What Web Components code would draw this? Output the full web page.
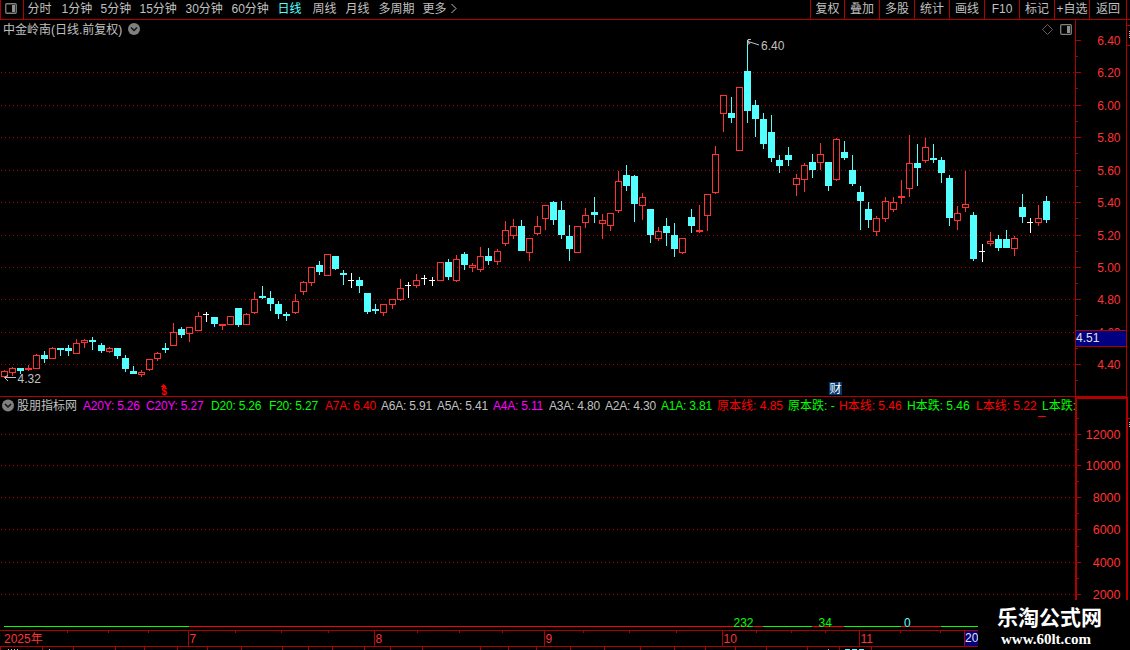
<!DOCTYPE html>
<html lang="zh-CN">
<head>
<meta charset="utf-8">
<title>中金岭南</title>
<style>
    body {
        margin: 0;
        width: 1130px;
        height: 650px;
        overflow: hidden;
        background: #000;
        color: #c0c0c0;
        font: 12px/14px "Liberation Sans", "Noto Sans CJK SC", sans-serif;
    }
</style>
</head>
<body>
<stock-terminal>
    <period-toolbar slot="toolbar"></period-toolbar>
    <price-chart slot="price"></price-chart>
    <indicator-legend slot="legend" name="股朋指标网"></indicator-legend>
    <indicator-chart slot="indicator"></indicator-chart>
    <time-axis slot="time"></time-axis>
    <site-mark slot="mark" host="www.60lt.com">乐淘公式网</site-mark>
</stock-terminal>

<script>
const LINE = '#b00000';
const RED = '#ff3232';
const CYAN = '#54ffff';

const hline = (x1, x2, y, color = LINE, h = 1) =>
    `<rect x="${x1}" y="${y}" width="${x2 - x1}" height="${h}" fill="${color}"/>`;
const vline = (x, y1, y2, color = LINE, w = 1) =>
    `<rect x="${x}" y="${y1}" width="${w}" height="${y2 - y1}" fill="${color}"/>`;
const dots = (y) =>
    `<path d="M1 ${y + 0.5}H1075" stroke="#b00000" stroke-dasharray="1 3"/>`;
const label = (x, y, text, color = RED, anchor = 'start', size = 12) =>
    `<text x="${x}" y="${y}" fill="${color}" text-anchor="${anchor}" font-size="${size}">${text}</text>`;

const SVG_STYLE = `
    :host { display: block; }
    svg { display: block; shape-rendering: crispEdges; }
`;

class StockTerminal extends HTMLElement {
    constructor() {
        super();
        this.attachShadow({ mode: 'open' }).innerHTML = `
            <style>
                :host {
                    display: grid;
                    position: relative;
                    width: 1130px;
                    height: 650px;
                    grid-template-rows: 20px 377px 17px 216px 20px;
                    overflow: hidden;
                }
                .mark {
                    position: absolute;
                    right: 0;
                    bottom: 0;
                }
            </style>
            <slot name="toolbar"></slot>
            <slot name="price"></slot>
            <slot name="legend"></slot>
            <slot name="indicator"></slot>
            <slot name="time"></slot>
            <div class="mark"><slot name="mark"></slot></div>
        `;
    }
}

class PeriodToolbar extends HTMLElement {
    constructor() {
        super();
        // label, cell width
        const periods = [
            ['分时', 34], ['1分钟', 39], ['5分钟', 39], ['15分钟', 46], ['30分钟', 46], ['60分钟', 46],
            ['日线', 35], ['周线', 33], ['月线', 33], ['多周期', 44], ['更多', 27]
        ];
        const tools = [
            ['复权', 34], ['叠加', 35], ['多股', 35], ['统计', 35], ['画线', 35],
            ['F10', 35], ['标记', 35], ['+自选', 35], ['返回', 37]
        ];
        this.attachShadow({ mode: 'open' }).innerHTML = `
            <style>
                :host {
                    display: flex;
                    box-sizing: border-box;
                    height: 20px;
                    border-bottom: 1px solid ${LINE};
                    line-height: 19px;
                    white-space: nowrap;
                }
                .toggle {
                    box-sizing: border-box;
                    width: 24px;
                    padding: 3px 0 0 4px;
                    border: solid ${LINE};
                    border-width: 0 1px;
                    margin-right: 3.5px;
                }
                svg { display: block; }
                .active { color: ${CYAN}; }
                .tools {
                    display: flex;
                    margin-left: auto;
                    margin-right: 3px;
                    border-right: 1px solid ${LINE};
                }
                .tools span {
                    box-sizing: border-box;
                    border-left: 1px solid ${LINE};
                    text-align: center;
                }
            </style>
            <div class="toggle">
                <svg width="12" height="11"><rect x=".75" y=".75" width="10.5" height="9.5" rx="1" fill="none" stroke="#808080" stroke-width="1.3"/><rect x="7" y="2" width="3" height="7" fill="#909090"/></svg>
            </div>
            ${periods.map(([t, w]) => `<span style="width:${w}px" class="${t === '日线' ? 'active' : ''}">${t}</span>`).join('')}
            <svg width="10" height="18"><path d="M1.500 4L6 8.500L1.500 13" fill="none" stroke="#c0c0c0"/></svg>
            <div class="tools">${tools.map(([t, w]) => `<span style="width:${w}px">${t}</span>`).join('')}</div>
        `;
    }
}

class PriceChart extends HTMLElement {
    constructor() {
        super();
        this.attachShadow({ mode: 'open' }).innerHTML = `<style>${SVG_STYLE}</style>${this.draw()}`;
    }

    // x, kind (r hollow, s solid red, c cyan, w doji), high, body top, body bottom, low
    static candles = `
        4r370,371,377,377 12r367,368,373,376 20c368,368,371,374 28s365,368,370,371 36r354,355,369,369
        44c351,355,359,363 52r347,348,359,359 60c348,348,350,356 68c345,348,351,356 76r339,343,354,354
        84r339,340,343,348 92c337,340,342,350 101c343,345,351,353 109r347,348,352,353 117c348,348,356,359
        125c355,358,369,372 133c366,371,374,374 141r370,372,375,377 149r359,359,370,371 157r352,353,359,361
        165c343,348,350,353 173r323,332,346,346 181c327,329,335,338 189r327,327,334,342 198r312,316,331,331
        206w312,314,315,322 214c317,317,324,327 222s324,324,326,330 230r316,316,325,325 238c308,308,325,327
        246r313,314,325,325 254r292,299,313,314 262c286,296,298,299 270c291,298,304,311 278c301,304,314,319
        286c312,314,316,321 295r294,301,313,314 303r281,282,292,295 311r267,267,283,286 319c261,265,272,275
        327r254,254,276,276 335c256,256,269,270 343c270,273,275,285 351w273,280,281,288 359c277,280,286,293
        367c293,293,312,314 375c304,309,311,314 383r304,304,313,316 392r299,299,305,309 400r279,288,300,301
        408w282,285,286,298 416r274,280,286,288 424w275,278,279,285 432w277,280,281,286 440r262,262,281,281
        448c259,262,277,280 456r255,259,281,282 464c252,254,265,270 472r263,265,268,272 480r247,256,270,272
        488c248,256,261,265 497r249,251,262,265 505r221,230,244,246 513r219,226,236,239 521c220,226,251,251
        529r238,238,253,261 537r216,226,234,235 545r205,205,219,230 553c201,202,220,225 561c201,210,235,239
        569c225,236,249,261 577r226,226,253,253 585r208,215,223,228 594c197,212,215,223 602r214,220,224,239
        610r213,213,226,231 618r171,181,211,213 626c165,175,186,191 634c175,176,204,222 642r193,197,206,220
        650c209,209,235,243 658r227,231,239,241 666c218,226,233,246 674c223,235,249,257 682r238,238,253,254
        691c209,217,226,233 699s205,230,232,233 707r194,194,216,231 715r146,154,193,194 723r95,95,114,132
        731c97,113,118,123 739r87,87,151,151 747c40,71,111,123 755c100,105,119,137 763c113,119,144,149
        771c115,132,158,162 779c155,160,166,173 788c147,155,160,166 796r174,178,185,196 804r163,165,180,192
        812c154,162,170,178 820r143,154,163,170 828c162,162,186,191 836r138,139,180,181 844c141,152,158,160
        852c155,170,184,186 860c186,192,201,230 868c202,209,220,228 876r216,218,232,236 885r197,201,219,222
        893r197,202,210,212 901s180,196,198,204 909r135,163,189,197 917c144,163,168,186 925r138,147,161,163
        933c144,158,160,163 941c157,160,173,183 949c175,178,218,226 957r206,213,221,230 965r171,204,208,212
        973c212,215,259,261 982w244,251,252,262 990r232,241,244,246 998c235,239,248,251 1006c230,239,248,248
        1014r236,238,249,256 1022c194,207,217,223 1030w218,222,223,233 1038r205,218,223,226 1046c196,201,220,223
    `.trim().split(/\s+/).map((s) => {
        const [, x, kind, rest] = s.match(/^(\d+)([a-z])(.*)$/);
        return [Number(x), kind, ...rest.split(',').map(Number)];
    });

    candle([x, kind, high, top, bottom, low]) {
        const color = { c: CYAN, w: '#fff' }[kind] || RED;
        if (kind === 'r') {
            return vline(x, high, top, color) + vline(x, bottom, low, color) +
                `<rect x="${x - 2.5}" y="${top + 0.5}" width="6" height="${bottom - top - 1}" fill="none" stroke="${color}"/>`;
        }
        // a doji's bar is one pixel shorter than a body
        const right = kind === 'w' ? 3 : 4;
        return vline(x, high, low, color) + hline(x - 3, x + right, top, color, bottom - top);
    }

    draw() {
        const levels = [40, 72, 105, 137, 170, 202, 235, 267, 299, 332, 364];
        const axis = levels.map((y, i) =>
            hline(1076, 1081, y) + hline(1076, 1078, y + 16) +
            label(1120.5, y + 5, (6.4 - i * 0.2).toFixed(2), RED, 'end')).join('');
        return `
            <svg width="1130" height="377" viewBox="0 20 1130 377">
                ${levels.slice(1).map(dots).join('')}
                ${PriceChart.candles.map((c) => this.candle(c)).join('')}
                ${label(3, 34, '中金岭南(日线.前复权)', '#c0c0c0')}
                <g shape-rendering="auto">
                    <circle cx="134" cy="29" r="6" fill="#808080"/>
                    <path d="M131 27.500L134 30.500L137 27.500" fill="none" stroke="#111" stroke-width="1.500"/>
                    <path d="M1042.500 29.500L1047.500 24.500L1052.500 29.500L1047.500 34.500Z" fill="none" stroke="#777" stroke-width=".8"/>
                    <rect x="1060.700" y="24.700" width="10.600" height="9.600" rx="1" fill="none" stroke="#808080" stroke-width="1.300"/>
                    <rect x="1067" y="26" width="3" height="7" fill="#909090"/>
                    <path d="M748 41.500L753 43L759 45M751 39.500H748V45M748 41L750 44" fill="none" stroke="#c0c0c0"/>
                    <path d="M16 377.500H4.500L8 375M4.500 377.500L8 381" fill="none" stroke="#c0c0c0"/>
                    <path d="M160.500 387L163.500 384L166.500 387Z" fill="#f00"/>
                </g>
                ${label(761, 50, '6.40', '#c0c0c0')}
                ${label(17.5, 383, '4.32', '#c0c0c0')}
                <text x="164" y="394.500" fill="#f00" text-anchor="middle" font-size="10" font-weight="bold">$</text>
                <rect x="829" y="382" width="13" height="13" fill="#003870"/>
                ${label(829.5, 393, '财', '#fff')}
                ${vline(1075, 20, 397)}${vline(1126, 20, 397)}
                ${axis}
                <rect x="1076" y="330" width="50" height="16" fill="#000080"/>
                ${hline(1076, 1126, 330)}${hline(1076, 1126, 346)}
                ${label(1076, 342, '4.51', '#e0e0e0')}
                ${hline(1127, 1130, 25)}${hline(1127, 1130, 45)}
                <path d="M1129.500 31V38" stroke="#c0c0c0" stroke-dasharray="1 1"/>
                ${hline(0, 1126, 396)}
            </svg>
        `;
    }
}

class IndicatorLegend extends HTMLElement {
    constructor() {
        super();
        const W = '#c0c0c0', M = '#ff00ff', G = '#00ff00', R = '#ff0000';
        const items = [
            ['A20Y: 5.26', M, 63], ['C20Y: 5.27', M, 65], ['D20: 5.26', G, 58], ['F20: 5.27', G, 56],
            ['A7A: 6.40', R, 56], ['A6A: 5.91', W, 56], ['A5A: 5.41', W, 56], ['A4A: 5.11', M, 56],
            ['A3A: 4.80', W, 56], ['A2A: 4.30', W, 56], ['A1A: 3.81', G, 56], ['原本线: 4.85', R, 71],
            ['原本跌: -', G, 51], ['H本线: 5.46', R, 68], ['H本跌: 5.46', G, 69], ['L本线: 5.22', R, 66],
            ['L本跌:', G, 33]
        ];
        this.attachShadow({ mode: 'open' }).innerHTML = `
            <style>
                :host {
                    display: flex;
                    height: 17px;
                    line-height: 18px;
                    white-space: nowrap;
                }
                svg { flex: none; width: 17px; height: 17px; }
                .name { flex: none; width: 66px; }
                .item { flex: none; overflow: hidden; }
                .latin { letter-spacing: -0.2px; }
                .edge {
                    box-sizing: border-box;
                    flex: none;
                    width: 53px;
                    margin-left: auto;
                    margin-right: 2px;
                    border: 2px solid ${LINE};
                    border-bottom: 0;
                }
            </style>
            <svg><circle cx="8" cy="8.500" r="6" fill="#808080"/><path d="M5 7L8 10L11 7" fill="none" stroke="#111" stroke-width="1.500"/></svg>
            <span class="name">${this.getAttribute('name') || ''}</span>
            ${items.map(([t, c, w]) => `<span class="item ${/本/.test(t) ? '' : 'latin'}" style="width:${w}px;color:${c}">${t}</span>`).join('')}
            <div class="edge"></div>
        `;
    }
}

class IndicatorChart extends HTMLElement {
    constructor() {
        super();
        const levels = [434, 465, 497, 529, 562, 594];
        const runs = [
            [4, 189, 'g'], [189, 763, 'r'], [763, 812, 'g'], [812, 844, 'r'],
            [844, 901, 'g'], [901, 941, 'r'], [941, 978, 'g']
        ];
        this.attachShadow({ mode: 'open' }).innerHTML = `
            <style>${SVG_STYLE}</style>
            <svg width="1130" height="216" viewBox="0 414 1130 216">
                ${levels.map((y, i) => dots(y) + hline(1077, 1081, y) +
                    label(1120.5, y + 4.5, 12000 - i * 2000, RED, 'end', 12.5)).join('')}
                ${levels.map((y) => hline(1077, 1079, y - 16)).join('')}
                ${vline(1075, 414, 600, LINE, 2)}${vline(1126, 414, 600, LINE, 2)}
                ${hline(1128, 1130, 418)}
                <path d="M1129.500 422V428" stroke="#c0c0c0" stroke-dasharray="1 1"/>
                ${hline(1038, 1046, 416, '#f00')}
                ${runs.map(([a, b, c]) => hline(a, b, 626, c === 'g' ? '#00ff00' : '#ff0000')).join('')}
                ${label(733.5, 627, '232', '#00ff00')}
                ${label(818.5, 627, '34', '#00ff00')}
                ${label(904, 627, '0', CYAN)}
            </svg>
        `;
    }
}

class TimeAxis extends HTMLElement {
    constructor() {
        super();
        const months = [[188, '7'], [374, '8'], [544, '9'], [722, '10'], [859, '11']];
        const weeks = [67, 108, 148, 235, 281, 328, 417, 459, 502, 583, 629, 676, 756, 791, 825, 900, 940];
        const lower = [0, 42, 73, 115, 144, 177, 207, 241, 282, 308, 332, 364, 390, 422, 480, 508, 536,
            570, 604, 640, 674, 705, 735, 766, 807, 839, 871];
        this.attachShadow({ mode: 'open' }).innerHTML = `
            <style>${SVG_STYLE}</style>
            <svg width="1130" height="20" viewBox="0 630 1130 20">
                ${hline(0, 978, 630)}${hline(0, 978, 646)}
                ${weeks.map((x) => vline(x, 631, 633)).join('')}
                ${lower.map((x) => vline(x, 647, 650)).join('')}
                ${label(4, 643, '2025年')}
                ${months.map(([x, t]) => vline(x, 631, 646) + label(x + 1.5, 643, t)).join('')}
                <rect x="965" y="631" width="13" height="15" fill="#000080"/>
                ${vline(964, 631, 646)}
                ${label(965, 642, '20', '#e0e0e0')}
                <path d="M8 649.500H20M49 649.500H51M828 649.500H830" stroke="#c0c0c0" stroke-dasharray="1 2"/>
                <path d="M845 649.500H866" stroke="${CYAN}" stroke-dasharray="5 2"/>
            </svg>
        `;
    }
}

class SiteMark extends HTMLElement {
    constructor() {
        super();
        this.attachShadow({ mode: 'open' }).innerHTML = `
            <style>
                :host {
                    display: block;
                    box-sizing: border-box;
                    width: 152px;
                    height: 50px;
                    padding: 6px 0 0 19px;
                    background: #000;
                    color: #fff;
                    white-space: nowrap;
                }
                .name {
                    font: bold 21px/24px "Liberation Sans", "Noto Sans CJK SC", sans-serif;
                    height: 25px;
                }
                .host {
                    padding-left: 4px;
                    font: bold 15px/16px "Liberation Serif", serif;
                }
            </style>
            <div class="name"><slot></slot></div>
            <div class="host">${this.getAttribute('host') || ''}</div>
        `;
    }
}

customElements.define('stock-terminal', StockTerminal);
customElements.define('period-toolbar', PeriodToolbar);
customElements.define('price-chart', PriceChart);
customElements.define('indicator-legend', IndicatorLegend);
customElements.define('indicator-chart', IndicatorChart);
customElements.define('time-axis', TimeAxis);
customElements.define('site-mark', SiteMark);
</script>
</body>
</html>
